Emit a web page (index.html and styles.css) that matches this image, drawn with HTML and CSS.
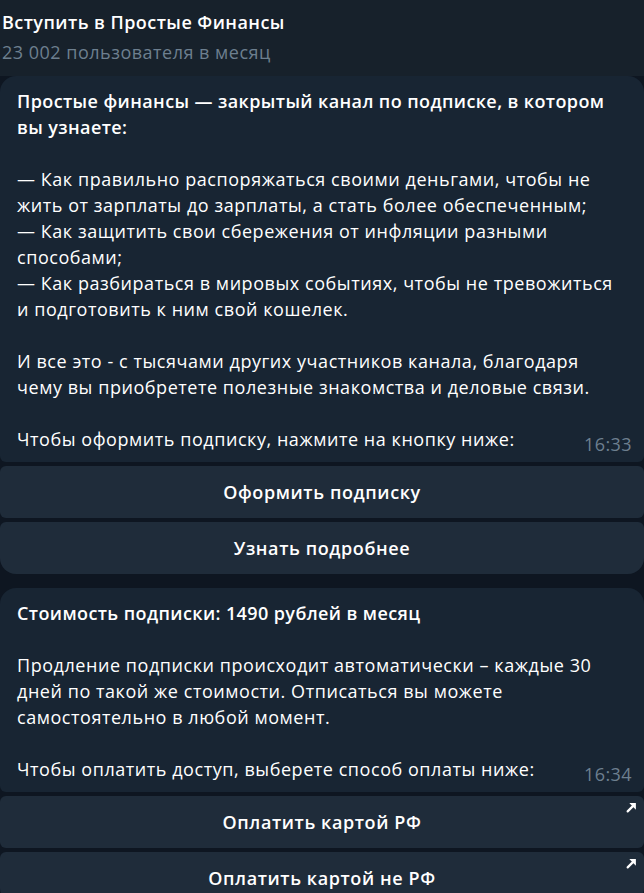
FILE: index.html
```html
<!DOCTYPE html>
<html lang="ru">
<head>
    <meta charset="UTF-8">
    <meta name="viewport" content="width=device-width, initial-scale=1.0">
    <title>Вступить в Простые Финансы</title>
    <link rel="stylesheet" href="styles.css">
</head>
<body>
    <div class="header">
        <div class="header-title">Вступить в Простые Финансы</div>
        <div class="header-sub">23 002 пользователя в месяц</div>
    </div>

    <div class="chat">
        <div class="message">
            <div class="bubble">
                <p class="bold">Простые финансы — закрытый канал по подписке, в котором<br>вы узнаете:</p>
                <p>— Как правильно распоряжаться своими деньгами, чтобы не<br>жить от зарплаты до зарплаты, а стать более обеспеченным;<br>— Как защитить свои сбережения от инфляции разными<br>способами;<br>— Как разбираться в мировых событиях, чтобы не тревожиться<br>и подготовить к ним свой кошелек.</p>
                <p>И все это - с тысячами других участников канала, благодаря<br>чему вы приобретете полезные знакомства и деловые связи.</p>
                <p>Чтобы оформить подписку, нажмите на кнопку ниже:</p>
                <span class="time">16:33</span>
            </div>
            <div class="keyboard">
                <button class="kb-btn">Оформить подписку</button>
                <button class="kb-btn">Узнать подробнее</button>
            </div>
        </div>

        <div class="message">
            <div class="bubble">
                <p class="bold">Стоимость подписки: 1490 рублей в месяц</p>
                <p>Продление подписки происходит автоматически – каждые 30<br>дней по такой же стоимости. Отписаться вы можете<br>самостоятельно в любой момент.</p>
                <p>Чтобы оплатить доступ, выберете способ оплаты ниже:</p>
                <span class="time">16:34</span>
            </div>
            <div class="keyboard">
                <button class="kb-btn">Оплатить картой РФ
                    <svg class="link-icon" width="11" height="11" viewBox="0 0 10 10"><path d="M1.5 8.5 L6.5 3.5" stroke="#fff" stroke-width="2" stroke-linecap="round"/><path d="M3 1 H9 V7 Z" fill="#fff"/></svg>
                </button>
                <button class="kb-btn">Оплатить картой не РФ
                    <svg class="link-icon" width="11" height="11" viewBox="0 0 10 10"><path d="M1.5 8.5 L6.5 3.5" stroke="#fff" stroke-width="2" stroke-linecap="round"/><path d="M3 1 H9 V7 Z" fill="#fff"/></svg>
                </button>
            </div>
        </div>
    </div>
</body>
</html>
```

FILE: styles.css
```css
body {
    font-family: "Open Sans", "Noto Sans", sans-serif;
    background-color: #0e1621;
    color: #fff;
    margin: 0;
    padding: 0;
    overflow: hidden;
}

.header {
    background-color: #17212b;
    height: 76px;
    padding: 8px 0 0 2px;
    box-sizing: border-box;
}

.header-title {
    font-size: 18px;
    font-weight: 600;
    line-height: 28px;
    letter-spacing: 0.45px;
}

.header-sub {
    font-size: 18px;
    line-height: 32px;
    letter-spacing: 0.5px;
    color: #6d7f8f;
}

.chat {
    display: flex;
    flex-direction: column;
    gap: 14px;
}

.message {
    display: flex;
    flex-direction: column;
    gap: 4px;
}

.bubble {
    position: relative;
    background-color: #182533;
    border-radius: 16px 16px 6px 6px;
    padding: 12px 17px 10px;
    font-size: 18px;
    line-height: 26px;
    letter-spacing: 0.55px;
}

.bubble p {
    margin: 0 0 26px;
}

.bubble p:last-of-type {
    margin-bottom: 0;
}

.bold {
    font-weight: 600;
    letter-spacing: 0.4px;
}

.time {
    position: absolute;
    right: 12px;
    bottom: 5px;
    font-size: 18px;
    letter-spacing: 0.4px;
    color: #6d7f8f;
}

.keyboard {
    display: flex;
    flex-direction: column;
    gap: 4px;
}

.kb-btn {
    position: relative;
    height: 52px;
    background-color: #1f2c3a;
    border: none;
    border-radius: 6px;
    color: #fff;
    font-family: inherit;
    font-size: 18px;
    font-weight: 600;
    letter-spacing: 0.6px;
    cursor: pointer;
}

.kb-btn:last-child {
    border-radius: 6px 6px 16px 16px;
}

.link-icon {
    position: absolute;
    top: 6px;
    right: 7px;
}
```
